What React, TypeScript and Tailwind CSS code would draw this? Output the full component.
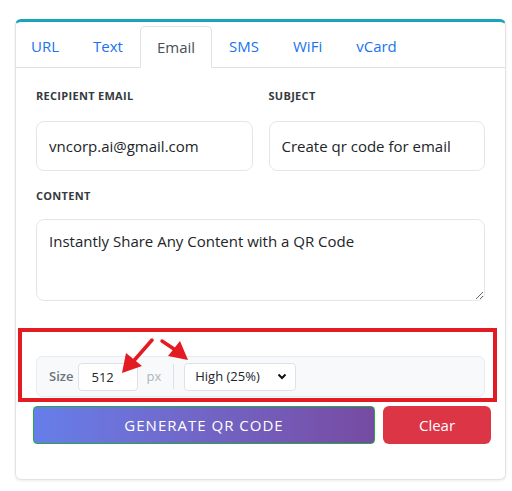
import React, { useState } from 'react';

const tabs = ['URL', 'Text', 'Email', 'SMS', 'WiFi', 'vCard'];

function Annotation() {
  return (
    <div className="pointer-events-none absolute inset-0">
      <div className="absolute left-[18px] top-[328px] h-[74px] w-[479px] border-4 border-[#e31b23]" />
      <svg className="absolute left-0 top-0" width="512" height="491" viewBox="0 0 512 491">
        <line x1="152" y1="340" x2="131" y2="364" stroke="#e31b23" strokeWidth="3.5" strokeLinecap="round" />
        <polygon points="122,373 126,353 142,366" fill="#e31b23" />
        <line x1="162" y1="341" x2="177" y2="351" stroke="#e31b23" strokeWidth="3.5" strokeLinecap="round" />
        <polygon points="188,360 168,356 180,341" fill="#e31b23" />
      </svg>
    </div>
  );
}

export default function App() {
  const [active, setActive] = useState('Email');

  return (
    <div className="relative h-[491px] w-[512px] bg-white" style={{ fontFamily: '"Open Sans", "Noto Sans", sans-serif' }}>
      <div className="pt-[19px] pl-[15px]">
        <div className="h-[461px] w-[491px] overflow-hidden rounded-md border border-t-[3px] border-[#e3e3e3] border-t-[#1ba3b9] shadow-[0_1px_3px_rgba(0,0,0,0.08)]">
          {/* tabs */}
          <div className="flex border-b border-[#dee2e6] pt-[4px]">
            <div className="-ml-[2px] flex">
              {tabs.map((t) => (
                <button
                  key={t}
                  onClick={() => setActive(t)}
                  className={
                    t === active
                      ? '-mb-px h-[42px] rounded-t-[5px] border border-[#dee2e6] border-b-white bg-white px-[16px] text-[15px] text-[#495057]'
                      : 'h-[41px] border border-transparent px-[16px] text-[15px] text-[#1a73f0]'
                  }
                >
                  {t}
                </button>
              ))}
            </div>
          </div>

          <div className="px-5 pt-[20px]">
            <div className="grid grid-cols-2 gap-4">
              <div>
                <div className="text-[11px] font-bold uppercase tracking-[0.3px] text-[#343a40]">Recipient Email</div>
                <input
                  defaultValue="vncorp.ai@gmail.com"
                  className="mt-[16px] h-[50px] w-full rounded-lg border border-[#e6e6e6] px-[12px] text-[15px] text-[#212529] outline-none"
                />
              </div>
              <div>
                <div className="text-[11px] font-bold uppercase tracking-[0.3px] text-[#343a40]">Subject</div>
                <input
                  defaultValue="Create qr code for email"
                  className="mt-[16px] h-[50px] w-full rounded-lg border border-[#e6e6e6] px-[12px] text-[15px] text-[#212529] outline-none"
                />
              </div>
            </div>

            <div className="mt-[17px] text-[11px] font-bold uppercase tracking-[0.3px] text-[#343a40]">Content</div>
            <textarea
              defaultValue="Instantly Share Any Content with a QR Code"
              className="mt-[15px] block h-[82px] w-full resize-y rounded-lg border border-[#e6e6e6] px-[12px] py-[10px] text-[15px] text-[#212529] outline-none"
            />

            <div className="mt-[55px] flex h-[41px] items-center rounded-md border border-[#e9ecef] bg-[#f8f9fa] px-3">
              <span className="text-[13px] font-semibold text-[#6c757d]">Size</span>
              <input
                defaultValue="512"
                className="ml-[5px] h-[28px] w-[60px] rounded border border-[#dee2e6] bg-white px-3 text-[13px] text-[#212529] outline-none"
              />
              <span className="ml-2 text-[13px] text-[#adb5bd]">px</span>
              <div className="ml-[12px] h-[25px] w-px bg-[#dee2e6]" />
              <div className="ml-[10px] flex h-[28px] w-[112px] items-center justify-between rounded border border-[#dee2e6] bg-white pl-[10px] pr-[8px]">
                <span className="text-[13px] text-[#212529]">High (25%)</span>
                <svg width="10" height="7" viewBox="0 0 10 7">
                  <path d="M1.5 1.5 L5 5 L8.5 1.5" fill="none" stroke="#111" strokeWidth="2" />
                </svg>
              </div>
            </div>

            <div className="-ml-[3px] mt-[9px] flex w-[458px] gap-2">
              <button className="h-[38px] w-[342px] rounded border border-[#28a745] bg-gradient-to-r from-[#667eea] to-[#764ba2] text-[15px] tracking-[1px] text-white">
                GENERATE QR CODE
              </button>
              <button className="h-[38px] flex-1 rounded-md bg-[#dc3545] text-[15px] text-white">Clear</button>
            </div>
          </div>
        </div>
      </div>
      <Annotation />
    </div>
  );
}
